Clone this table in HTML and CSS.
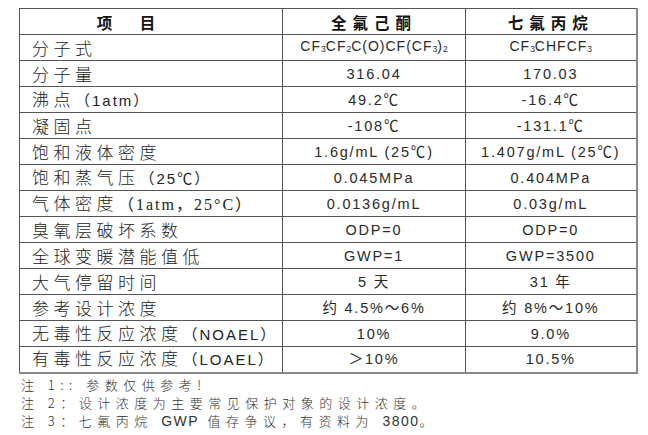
FILE: index.html
```html
<!DOCTYPE html>
<html lang="zh-CN">
<head>
<meta charset="utf-8">
<title>全氟己酮与七氟丙烷性能对比</title>
<link rel="stylesheet" href="styles.css">
</head>
<body>
<table class="props">
  <colgroup>
    <col class="c-item">
    <col class="c-a">
    <col class="c-b">
  </colgroup>
  <tr class="head">
    <th class="item">项　目</th>
    <th>全氟己酮</th>
    <th>七氟丙烷</th>
  </tr>
  <tr>
    <td class="label">分子式</td>
    <td class="val formula">CF<sub>3</sub>CF<sub>2</sub>C(O)CF(CF<sub>3</sub>)<sub>2</sub></td>
    <td class="val formula">CF<sub>3</sub>CHFCF<sub>3</sub></td>
  </tr>
  <tr>
    <td class="label">分子量</td>
    <td class="val">316.04</td>
    <td class="val">170.03</td>
  </tr>
  <tr>
    <td class="label">沸点<span class="lat">（1atm）</span></td>
    <td class="val">49.2℃</td>
    <td class="val">-16.4℃</td>
  </tr>
  <tr>
    <td class="label">凝固点</td>
    <td class="val">-108℃</td>
    <td class="val">-131.1℃</td>
  </tr>
  <tr>
    <td class="label">饱和液体密度</td>
    <td class="val">1.6g/mL (25℃)</td>
    <td class="val">1.407g/mL (25℃)</td>
  </tr>
  <tr>
    <td class="label">饱和蒸气压<span class="lat">（25℃）</span></td>
    <td class="val">0.045MPa</td>
    <td class="val">0.404MPa</td>
  </tr>
  <tr>
    <td class="label">气体密度<span class="lat serif">（1atm，25°C）</span></td>
    <td class="val">0.0136g/mL</td>
    <td class="val">0.03g/mL</td>
  </tr>
  <tr>
    <td class="label">臭氧层破坏系数</td>
    <td class="val">ODP=0</td>
    <td class="val">ODP=0</td>
  </tr>
  <tr>
    <td class="label">全球变暖潜能值低</td>
    <td class="val">GWP=1</td>
    <td class="val">GWP=3500</td>
  </tr>
  <tr>
    <td class="label">大气停留时间</td>
    <td class="val">5 天</td>
    <td class="val">31 年</td>
  </tr>
  <tr>
    <td class="label">参考设计浓度</td>
    <td class="val">约 4.5%～6%</td>
    <td class="val">约 8%～10%</td>
  </tr>
  <tr>
    <td class="label">无毒性反应浓度<span class="lat">（NOAEL）</span></td>
    <td class="val">10%</td>
    <td class="val">9.0%</td>
  </tr>
  <tr>
    <td class="label">有毒性反应浓度<span class="lat">（LOAEL）</span></td>
    <td class="val">＞10%</td>
    <td class="val">10.5%</td>
  </tr>
</table>
<div class="notes">
  <p>注 1:: 参数仅供参考!</p>
  <p>注 2：设计浓度为主要常见保护对象的设计浓度。</p>
  <p>注 3：七氟丙烷 <span class="n">GWP</span> 值存争议，有资料为 <span class="n">3800</span>。</p>
</div>
</body>
</html>
```
FILE: styles.css
```css
html, body {
  background: #ffffff;
}
body {
  margin: 8px 0 0 19px;
  color: #222;
  font-family: "Liberation Sans", "Noto Sans CJK SC", sans-serif;
}
.props {
  border-collapse: collapse;
  table-layout: fixed;
  width: 617px;
  border-right: 2px solid #888;
  border-bottom: 2px solid #888;
}
.c-item { width: 263px; }
.c-a { width: 183px; }
.c-b { width: 171px; }
.props tr {
  height: 26px;
}
.props th,
.props td {
  border: 1px solid #555;
  padding: 0;
  vertical-align: middle;
  white-space: nowrap;
  overflow: hidden;
}
.head th {
  font-family: "Noto Sans CJK SC", sans-serif;
  font-weight: 700;
  font-size: 15.5px;
  letter-spacing: 6px;
  text-align: center;
  line-height: 20px;
  color: #111;
}
.head th.item {
  padding-right: 44px;
}
.label {
  font-family: "Noto Sans CJK SC", sans-serif;
  font-weight: 300;
  font-size: 17px;
  letter-spacing: 4.5px;
  padding-left: 12px !important;
  text-align: left;
  line-height: 22px;
}
.label .lat {
  font-family: "Liberation Sans", "Noto Sans CJK SC", sans-serif;
  font-weight: 400;
  font-size: 15px;
  letter-spacing: 2px;
}
.label .lat.serif {
  font-family: "Liberation Serif", "Noto Sans CJK SC", serif;
  font-size: 16px;
  letter-spacing: 2px;
}
.val {
  text-align: center;
  font-family: "Liberation Sans", "Noto Sans CJK SC", sans-serif;
  font-size: 14.5px;
  letter-spacing: 1.8px;
  line-height: 20px;
  color: #2a2a2a;
}
.val.formula {
  font-size: 14px;
  letter-spacing: 1px;
}
.val sub {
  font-size: 8.5px;
  vertical-align: -1px;
  letter-spacing: 0;
}
.notes {
  margin-top: 2px;
  padding-left: 2px;
  color: #333;
  font-family: "Noto Sans CJK SC", sans-serif;
  font-weight: 300;
  font-size: 13px;
  letter-spacing: 5.5px;
}
.notes p {
  margin: 0;
  line-height: 18px;
}
.notes .n {
  font-family: "Liberation Sans", sans-serif;
  font-size: 14px;
  letter-spacing: 1.5px;
}
```
